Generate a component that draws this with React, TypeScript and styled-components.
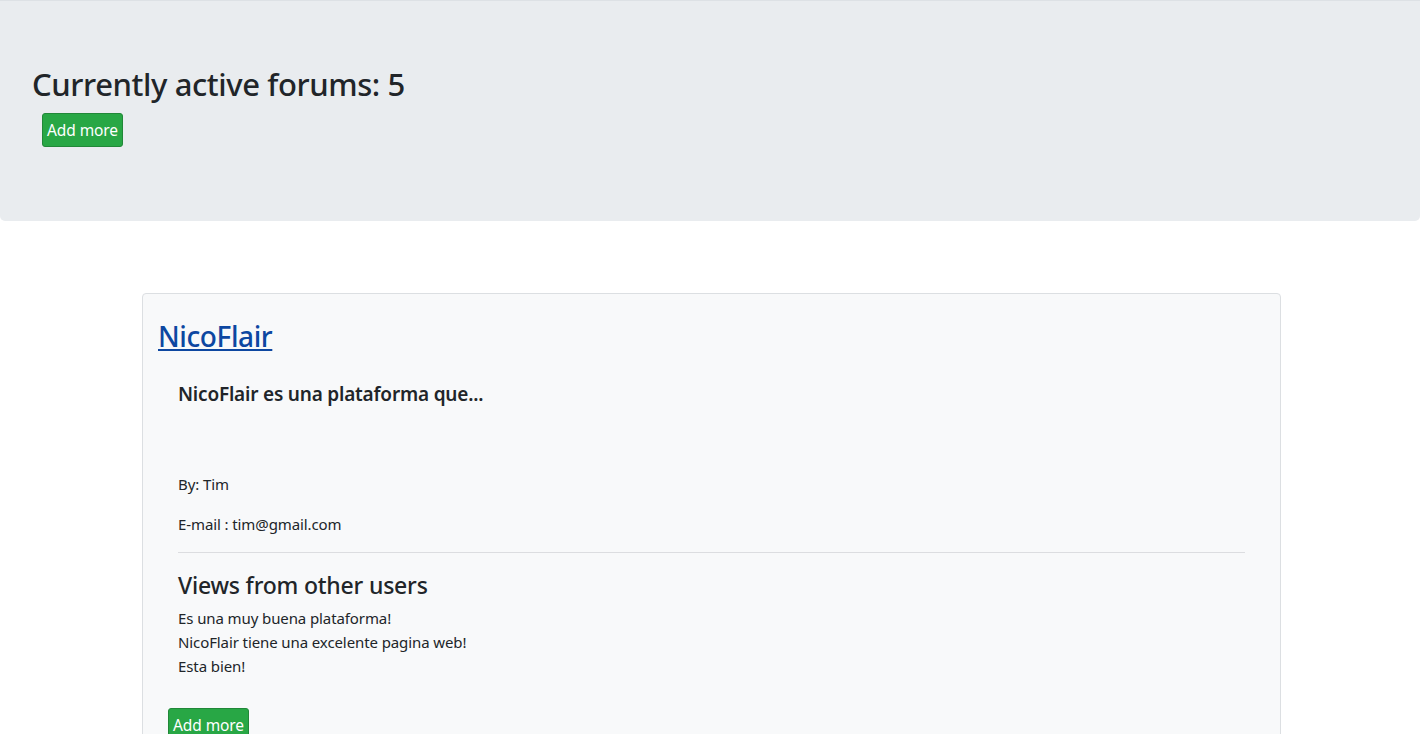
import React from "react";
import styled, { createGlobalStyle } from "styled-components";

const Global = createGlobalStyle`
  html, body { margin: 0; padding: 0; background: #fff; }
  body {
    font-family: "Noto Sans", "Open Sans", sans-serif;
    color: #212529;
    font-size: 16px;
    line-height: 1.5;
  }
`;

const Jumbotron = styled.section`
  box-sizing: border-box;
  height: 221px;
  padding: 65px 32px 0;
  background: #e9ecef;
  border-top: 1px solid #dde1e5;
  border-radius: 0 0 5px 5px;
  margin-bottom: 72px;
`;

const Heading = styled.h2`
  margin: 0 0 11px;
  font-size: 31px;
  font-weight: 500;
  line-height: 36px;
  letter-spacing: -0.4px;
  color: #212529;
`;

const GreenButton = styled.button<{ $indent: number }>`
  box-sizing: border-box;
  display: inline-flex;
  align-items: center;
  justify-content: center;
  height: 34px;
  width: 81px;
  margin-left: ${(p) => p.$indent}px;
  padding: 0;
  white-space: nowrap;
  background: #28a745;
  border: 1px solid #218838;
  border-radius: 3px;
  color: #fff;
  font-family: inherit;
  font-size: 15.5px;
  letter-spacing: -0.1px;
  cursor: pointer;
`;

const Card = styled.article`
  box-sizing: border-box;
  width: 1139px;
  margin-left: 142px;
  padding: 25px 35px 0 15px;
  background: #f8f9fa;
  border: 1px solid #dcdfe2;
  border-radius: 4px;
  min-height: 460px;
`;

const TitleLink = styled.a`
  display: inline-block;
  font-size: 28px;
  line-height: 34px;
  font-weight: 500;
  color: #0d47a1;
  text-decoration: underline;
  letter-spacing: -0.4px;
`;

const Body = styled.div`
  padding: 29px 0 0 20px;
`;

const Summary = styled.h5`
  margin: 0 0 66px;
  font-size: 19px;
  line-height: 24px;
  font-weight: 600;
  letter-spacing: -0.2px;
`;

const Meta = styled.p`
  margin: 0 0 16px;
  font-size: 15px;
  line-height: 24px;
  letter-spacing: -0.1px;
`;

const Rule = styled.hr`
  margin: 11px 0 17px;
  border: 0;
  border-top: 1px solid #dcdde0;
`;

const SubHeading = styled.h4`
  margin: 0 0 6px;
  font-size: 23px;
  line-height: 30px;
  font-weight: 500;
  letter-spacing: -0.2px;
`;

const Comment = styled.div`
  font-size: 15px;
  line-height: 24px;
  letter-spacing: -0.1px;
`;

const Footer = styled.div`
  padding-top: 30px;
`;

export default function App() {
  const comments = [
    "Es una muy buena plataforma!",
    "NicoFlair tiene una excelente pagina web!",
    "Esta bien!",
  ];
  return (
    <>
      <Global />
      <Jumbotron>
        <Heading>Currently active forums: 5</Heading>
        <GreenButton $indent={10}>Add more</GreenButton>
      </Jumbotron>
      <Card>
        <TitleLink href="#">NicoFlair</TitleLink>
        <Body>
          <Summary>NicoFlair es una plataforma que...</Summary>
          <Meta>By: Tim</Meta>
          <Meta>E-mail : tim@gmail.com</Meta>
          <Rule />
          <SubHeading>Views from other users</SubHeading>
          {comments.map((c) => (
            <Comment key={c}>{c}</Comment>
          ))}
        </Body>
        <Footer>
          <GreenButton $indent={10}>Add more</GreenButton>
        </Footer>
      </Card>
    </>
  );
}
